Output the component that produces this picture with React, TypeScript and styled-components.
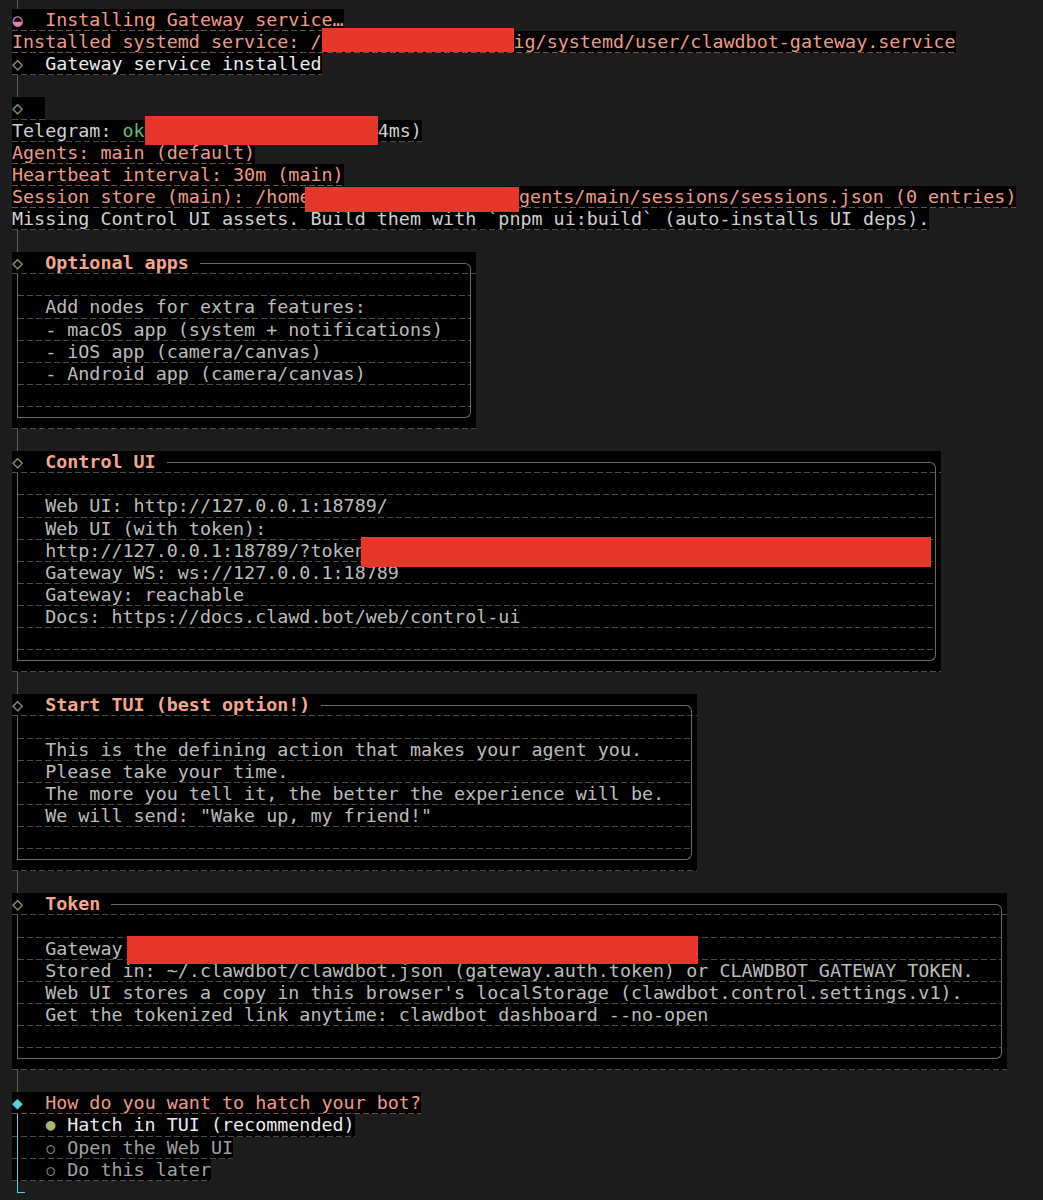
import React from "react";
import styled, { createGlobalStyle, css } from "styled-components";

const CW = 11.054;
const LH = 22.12;
const FS = 18.36;

const C = {
  page: "#1d1d1d",
  salmon: "#ee9c86",
  title: "#f4a78c",
  text: "#d0d0d0",
  body: "#bcbcbc",
  dim: "#a0a0a0",
  bright: "#ececec",
  ok: "#5fbf6e",
  diamond: "#8a9a7a",
  cyan: "#5ccfd2",
  radio: "#a9b86c",
  spinner: "#d884b4",
  rule: "#6a6a6a",
  gutter: "#5c5c5c",
  redact: "#e7362a",
};

const D = {
  salmon: "rgba(238,156,134,0.5)",
  gray: "rgba(170,170,170,0.45)",
};

const dash = (color: string) => css`
  background-image: repeating-linear-gradient(90deg, ${color} 0 6px, transparent 6px 9px);
  background-size: 100% 1px;
  background-position: left bottom;
  background-repeat: no-repeat;
`;

const Global = createGlobalStyle`
  html, body {
    margin: 0;
    padding: 0;
    background: ${C.page};
  }
  body {
    font-family: "DejaVu Sans Mono", "Liberation Mono", monospace;
    font-size: ${FS}px;
    line-height: ${LH}px;
    color: ${C.text};
  }
`;

const Screen = styled.main`
  display: flex;
  flex-direction: column;
  align-items: flex-start;
  padding-left: 12px;
  min-height: 1200px;
  overflow: hidden;
`;

const TopStub = styled.div`
  display: flex;
  height: 9px;
`;

const Row = styled.div`
  display: flex;
  align-items: stretch;
  height: ${LH}px;
  white-space: pre;
`;

const Ink = styled.span<{ $tone?: string; $dash?: string }>`
  display: inline-flex;
  align-items: center;
  height: 100%;
  background-color: #000;
  color: ${(p) => p.$tone ?? C.text};
  white-space: pre;
  ${(p) => dash(p.$dash ?? D.gray)}
`;

const Pad = styled.span<{ $n: number }>`
  display: block;
  flex: none;
  width: ${(p) => p.$n * CW}px;
`;

const Stem = styled.span<{ $color?: string }>`
  display: block;
  flex: none;
  width: ${CW}px;
  align-self: stretch;
  background-image: linear-gradient(${(p) => p.$color ?? C.gutter}, ${(p) => p.$color ?? C.gutter});
  background-repeat: no-repeat;
  background-size: 1px 100%;
  background-position: ${CW / 2 - 0.5}px 0;
`;

const Elbow = styled.span<{ $color: string }>`
  display: block;
  flex: none;
  width: ${CW}px;
  align-self: stretch;
  &::before {
    content: "";
    display: block;
    margin-left: ${CW / 2 - 0.5}px;
    width: ${CW / 2 + 1}px;
    height: ${LH / 2}px;
    border-left: 1px solid ${(p) => p.$color};
    border-bottom: 1px solid ${(p) => p.$color};
  }
`;

const Glyph = styled.span<{ $color: string; $size?: number }>`
  display: inline-block;
  flex: none;
  width: ${CW}px;
  text-align: center;
  color: ${(p) => p.$color};
  font-size: ${(p) => p.$size ?? FS}px;
  font-family: "DejaVu Sans Mono", "DejaVu Sans", monospace;
`;

const Ok = styled.span`
  color: ${C.ok};
`;

const Redact = styled.span<{ $w: number; $h: number; $dy: number; $dx?: number }>`
  position: relative;
  z-index: 1;
  display: block;
  flex: none;
  align-self: flex-start;
  width: ${(p) => p.$w}px;
  height: ${(p) => p.$h}px;
  margin-top: ${(p) => p.$dy}px;
  margin-left: ${(p) => p.$dx ?? 0}px;
  background: ${C.redact};
`;

const Panel = styled.section<{ $cols: number }>`
  display: flex;
  flex-direction: column;
  width: ${(p) => p.$cols * CW}px;
  background: #000;
  white-space: pre;
`;

const PanelHead = styled.div`
  display: flex;
  align-items: stretch;
  height: ${LH}px;
  ${dash(D.gray)}
`;

const Title = styled.span`
  display: flex;
  align-items: center;
  color: ${C.title};
  font-weight: 700;
  padding-left: ${2 * CW}px;
`;

const Rule = styled.span`
  flex: 1;
  align-self: flex-end;
  height: ${LH / 2}px;
  margin-left: ${CW}px;
  margin-right: ${CW / 2 - 0.5}px;
  border-top: 1px solid ${C.rule};
  border-right: 1px solid ${C.rule};
  border-top-right-radius: 6px;
  box-sizing: border-box;
`;

const PanelBody = styled.div`
  display: flex;
  flex-direction: column;
  margin: 0 ${CW / 2 - 0.5}px;
  border: 1px solid ${C.rule};
  border-top: none;
  border-bottom-right-radius: 6px;
  padding-bottom: ${LH / 2 - 1}px;
`;

const BodyLine = styled.div`
  display: flex;
  align-items: center;
  height: ${LH}px;
  padding-left: ${3 * CW - CW / 2 - 0.5}px;
  color: ${C.body};
  ${dash(D.gray)}
`;

const PanelFoot = styled.div`
  height: ${LH / 2}px;
  ${dash(D.gray)}
`;

type PanelProps = { cols: number; title: string; children: React.ReactNode };

function Note({ cols, title, children }: PanelProps) {
  return (
    <Panel $cols={cols}>
      <PanelHead>
        <Glyph $color={C.diamond}>◇</Glyph>
        <Title>{title}</Title>
        <Rule />
      </PanelHead>
      <PanelBody>
        <BodyLine />
        {children}
        <BodyLine />
      </PanelBody>
      <PanelFoot />
    </Panel>
  );
}

function Gap() {
  return (
    <Row>
      <Stem />
    </Row>
  );
}

const Option = styled.span<{ $active?: boolean }>`
  color: ${(p) => (p.$active ? C.bright : C.dim)};
`;

type ChoiceProps = { active?: boolean; label: string };

function Choice({ active, label }: ChoiceProps) {
  return (
    <Row>
      <Ink>
        <Stem $color={C.cyan} />
        <Pad $n={2} />
        {active ? (
          <Glyph $color={C.radio} $size={16}>●</Glyph>
        ) : (
          <Glyph $color={C.dim} $size={14}>○</Glyph>
        )}
        <Option $active={active}>{" " + label}</Option>
      </Ink>
    </Row>
  );
}

export default function App() {
  return (
    <>
      <Global />
      <Screen>
        <TopStub>
          <Stem />
        </TopStub>
        <Row>
          <Ink $tone={C.salmon} $dash={D.salmon}>
            <Glyph $color={C.spinner} $size={17}>◒</Glyph>
            {"  Installing Gateway service…"}
          </Ink>
        </Row>
        <Row>
          <Ink $tone={C.salmon} $dash={D.salmon}>
            {"Installed systemd service: /"}
            <Redact $w={192} $h={24} $dy={-3} />
            {"ig/systemd/user/clawdbot-gateway.service"}
          </Ink>
        </Row>
        <Row>
          <Ink $tone={C.bright}>
            <Glyph $color={C.diamond}>◇</Glyph>
            {"  Gateway service installed"}
          </Ink>
        </Row>
        <Gap />
        <Row>
          <Ink>
            <Glyph $color={C.diamond}>◇</Glyph>
            <Pad $n={2} />
          </Ink>
        </Row>
        <Row>
          <Ink $tone={C.text}>
            {"Telegram: "}
            <Ok>ok</Ok>
            <Redact $w={233} $h={29} $dy={-3.5} />
            {"4ms)"}
          </Ink>
        </Row>
        <Row>
          <Ink $tone={C.salmon} $dash={D.salmon}>
            {"Agents: main (default)"}
          </Ink>
        </Row>
        <Row>
          <Ink $tone={C.salmon} $dash={D.salmon}>
            {"Heartbeat interval: 30m (main)"}
          </Ink>
        </Row>
        <Row>
          <Ink $tone={C.salmon} $dash={D.salmon}>
            {"Session store (main): /home"}
            <Redact $w={214} $h={25} $dy={1} $dx={-5.4} />
            {"gents/main/sessions/sessions.json (0 entries)"}
          </Ink>
        </Row>
        <Row>
          <Ink $tone={C.text}>
            {"Missing Control UI assets. Build them with `pnpm ui:build` (auto-installs UI deps)."}
          </Ink>
        </Row>
        <Gap />
        <Note cols={42} title="Optional apps">
          <BodyLine>Add nodes for extra features:</BodyLine>
          <BodyLine>- macOS app (system + notifications)</BodyLine>
          <BodyLine>- iOS app (camera/canvas)</BodyLine>
          <BodyLine>- Android app (camera/canvas)</BodyLine>
        </Note>
        <Gap />
        <Note cols={84} title="Control UI">
          <BodyLine>Web UI: http://127.0.0.1:18789/</BodyLine>
          <BodyLine>Web UI (with token):</BodyLine>
          <BodyLine>
            {"http://127.0.0.1:18789/?token"}
            <Redact $w={570} $h={30} $dy={-3} $dx={-4.6} />
          </BodyLine>
          <BodyLine>Gateway WS: ws://127.0.0.1:18789</BodyLine>
          <BodyLine>Gateway: reachable</BodyLine>
          <BodyLine>Docs: https://docs.clawd.bot/web/control-ui</BodyLine>
        </Note>
        <Gap />
        <Note cols={62} title="Start TUI (best option!)">
          <BodyLine>This is the defining action that makes your agent you.</BodyLine>
          <BodyLine>Please take your time.</BodyLine>
          <BodyLine>The more you tell it, the better the experience will be.</BodyLine>
          <BodyLine>{'We will send: "Wake up, my friend!"'}</BodyLine>
        </Note>
        <Gap />
        <Note cols={90} title="Token">
          <BodyLine>
            {"Gateway "}
            <Redact $w={571} $h={28} $dy={-2} $dx={-6.6} />
          </BodyLine>
          <BodyLine>Stored in: ~/.clawdbot/clawdbot.json (gateway.auth.token) or CLAWDBOT_GATEWAY_TOKEN.</BodyLine>
          <BodyLine>{"Web UI stores a copy in this browser's localStorage (clawdbot.control.settings.v1)."}</BodyLine>
          <BodyLine>Get the tokenized link anytime: clawdbot dashboard --no-open</BodyLine>
        </Note>
        <Gap />
        <Row>
          <Ink $tone={C.salmon} $dash={D.salmon}>
            <Glyph $color={C.cyan} $size={18}>◆</Glyph>
            {"  How do you want to hatch your bot?"}
          </Ink>
        </Row>
        <Choice active label="Hatch in TUI (recommended)" />
        <Choice label="Open the Web UI" />
        <Choice label="Do this later" />
        <Row>
          <Elbow $color={C.cyan} />
        </Row>
      </Screen>
    </>
  );
}
